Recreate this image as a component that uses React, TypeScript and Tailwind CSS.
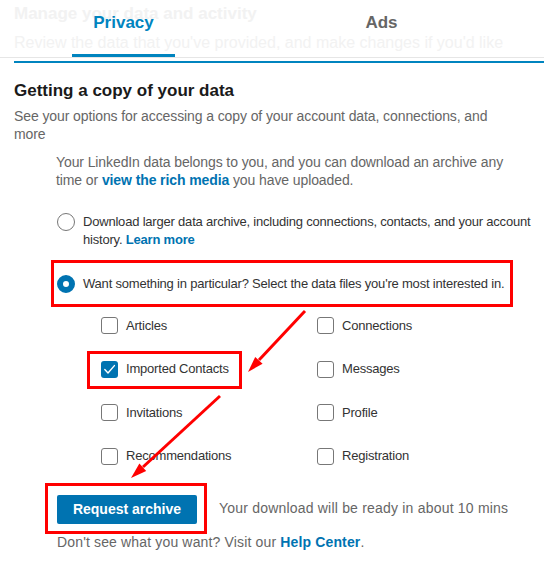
import type { ReactNode } from "react";

const FONT = { fontFamily: '"Liberation Sans", Arial, sans-serif' };

function Radio({ checked }: { checked?: boolean }) {
  return checked ? (
    <span className="block h-[18px] w-[18px] shrink-0 rounded-full border-[6px] border-[#0073b1] bg-white" />
  ) : (
    <span className="block h-[18px] w-[18px] shrink-0 rounded-full border border-[#777] bg-white" />
  );
}

function Checkbox({ checked }: { checked?: boolean }) {
  if (checked) {
    return (
      <span className="flex h-[17px] w-[17px] shrink-0 items-center justify-center rounded-[3px] bg-[#0073b1]">
        <svg width="13" height="13" viewBox="0 0 13 13" fill="none">
          <path d="M1.8 6.6 L5 10 L11.4 2.6" stroke="white" strokeWidth="1.4" strokeLinecap="round" strokeLinejoin="round" />
        </svg>
      </span>
    );
  }
  return <span className="block h-[17px] w-[17px] shrink-0 rounded-[3px] border border-[#777] bg-white" />;
}

function Option({ label, checked, marked }: { label: string; checked?: boolean; marked?: boolean }) {
  return (
    <div className="relative flex h-[17px] w-fit items-center gap-2 self-start justify-self-start">
      <Checkbox checked={checked} />
      <span className="text-[13px] leading-[18px] tracking-[-0.2px] text-[#333]">{label}</span>
      {marked && (
        <span className="pointer-events-none absolute -top-[10px] -bottom-[11px] -left-[14px] -right-[13px] border-[3px] border-[#ff0000]" />
      )}
    </div>
  );
}

function Link({ children }: { children: ReactNode }) {
  return <span className="font-bold text-[#0073b1]">{children}</span>;
}

// Red annotation arrows drawn over the form
function Arrows() {
  return (
    <svg className="pointer-events-none absolute inset-0" width="544" height="564">
      <line x1="305" y1="311" x2="259" y2="360" stroke="#ff0000" strokeWidth="3" />
      <polygon points="248,372 262.6,363.7 255.2,356.9" fill="#ff0000" />
      <line x1="220" y1="396" x2="143" y2="467" stroke="#ff0000" strokeWidth="3" />
      <polygon points="131,478 146.2,470.9 139.4,463.5" fill="#ff0000" />
    </svg>
  );
}

export default function App() {
  const files: [string, boolean][] = [
    ["Articles", false],
    ["Connections", false],
    ["Imported Contacts", true],
    ["Messages", false],
    ["Invitations", false],
    ["Profile", false],
    ["Recommendations", false],
    ["Registration", false],
  ];

  return (
    <div className="relative h-[564px] w-[544px] overflow-hidden bg-white" style={FONT}>
      {/* header with faded page title behind the tabs */}
      <div className="relative h-[58px] border-b border-[#e6e6e6]">
        <div className="pl-[14px] pt-[3px] text-[17px] font-bold leading-[22px] text-[#f2f2f2]">
          Manage your data and activity
        </div>
        <div className="mt-[8px] pl-[14px] text-[16px] leading-[20px] text-[#f2f2f2]">
          Review the data that you've provided, and make changes if you'd like
        </div>
        <div className="absolute inset-x-0 top-0 flex pl-[72px]">
          <div className="flex h-[57px] w-[103px] flex-col items-center border-b-[3px] border-[#0084bf]">
            <span className="mt-[12px] text-[17px] font-bold leading-[22px] text-[#0084bf]">Privacy</span>
          </div>
          <div className="ml-[155px] flex h-[57px] w-[103px] flex-col items-center">
            <span className="mt-[12px] text-[17px] font-bold leading-[22px] text-[#666]">Ads</span>
          </div>
        </div>
      </div>
      <div className="ml-[14px] mt-[3px] h-[2px] bg-[#0084bf]" />

      <h2 className="ml-[14px] mt-[17px] text-[17px] font-bold leading-[22px] text-[#1a1a1a]">
        Getting a copy of your data
      </h2>
      <p className="ml-[14px] mt-[5px] text-[14px] leading-[18px] tracking-[-0.1px] text-[#666]">
        See your options for accessing a copy of your account data, connections, and
        <br />
        more
      </p>
      <p className="ml-[56px] mt-[10px] text-[14px] leading-[18px] tracking-[-0.1px] text-[#666]">
        Your LinkedIn data belongs to you, and you can download an archive any
        <br />
        time or <Link>view the rich media</Link> you have uploaded.
      </p>

      <div className="ml-[57px] mt-[24px] flex items-start gap-2">
        <Radio />
        <p className="text-[13px] leading-[18px] tracking-[-0.2px] text-[#333]">
          Download larger data archive, including connections, contacts, and your account
          <br />
          history. <Link>Learn more</Link>
        </p>
      </div>

      <div className="ml-[51px] mt-[11px] flex h-[47px] w-[462px] items-center gap-2 border-[3px] border-[#ff0000] pl-[3px]">
        <Radio checked />
        <span className="whitespace-nowrap text-[13px] leading-[18px] tracking-[-0.2px] text-[#333]">
          Want something in particular? Select the data files you're most interested in.
        </span>
      </div>

      <div className="ml-[101px] mt-[10px] grid grid-cols-[216px_1fr] gap-y-[26.5px]">
        {files.map(([label, checked]) => (
          <Option key={label} label={label} checked={checked} marked={checked} />
        ))}
      </div>

      <div className="ml-[45px] mt-[18px] flex items-center">
        <div className="border-[3px] border-[#ff0000] pb-[7px] pl-[9px] pr-[7px] pt-[9px]">
          <button className="h-[29px] w-[140px] rounded-[2px] bg-[#0073b1] text-[14px] font-bold text-white">
            Request archive
          </button>
        </div>
        <span className="ml-[12px] text-[14px] leading-[18px] tracking-[0.2px] text-[#666]">
          Your download will be ready in about 10 mins
        </span>
      </div>
      <p className="ml-[57px] -mt-px text-[14px] leading-[18px] tracking-[0.15px] text-[#666]">
        Don't see what you want? Visit our <Link>Help Center</Link>.
      </p>

      <Arrows />
    </div>
  );
}
